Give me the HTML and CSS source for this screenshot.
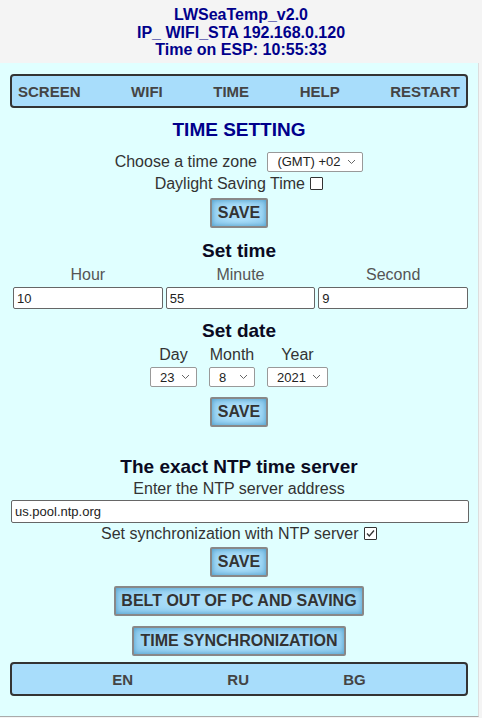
FILE: index.html
```html
<!DOCTYPE html>
<html>
<head>
<meta charset="utf-8">
<link rel="stylesheet" href="styles.css">
</head>
<body>
<header class="top">
  <div>LWSeaTemp_v2.0</div>
  <div>IP_ WIFI_STA 192.168.0.120</div>
  <div>Time on ESP: 10:55:33</div>
</header>
<main class="panel">
  <nav class="menu">
    <span>SCREEN</span><span>WIFI</span><span>TIME</span><span>HELP</span><span>RESTART</span>
  </nav>
  <h2 class="title">TIME SETTING</h2>
  <div class="row tzrow">Choose a time zone <select class="sel tz"><option>(GMT) +02</option></select></div>
  <div class="row">Daylight Saving Time <input type="checkbox" class="chk"></div>
  <div class="btnrow"><button class="btn">SAVE</button></div>

  <h3 class="sub">Set time</h3>
  <div class="grid3">
    <label class="lab">Hour</label><label class="lab">Minute</label><label class="lab">Second</label>
    <input class="inp" value="10"><input class="inp" value="55"><input class="inp" value="9">
  </div>

  <h3 class="sub date">Set date</h3>
  <div class="dates">
    <div class="dcol"><span>Day</span><select class="sel d"><option>23</option></select></div>
    <div class="dcol"><span>Month</span><select class="sel m"><option>8</option></select></div>
    <div class="dcol"><span>Year</span><select class="sel y"><option>2021</option></select></div>
  </div>
  <div class="btnrow dsave"><button class="btn">SAVE</button></div>

  <h3 class="sub ntp">The exact NTP time server</h3>
  <div class="row">Enter the NTP server address</div>
  <div class="ntprow"><input class="inp wide" value="us.pool.ntp.org"></div>
  <div class="row">Set synchronization with NTP server <input type="checkbox" class="chk" checked></div>
  <div class="btnrow nsave"><button class="btn">SAVE</button></div>
  <div class="btnrow big"><button class="btn">BELT OUT OF PC AND SAVING</button></div>
  <div class="btnrow big2"><button class="btn">TIME SYNCHRONIZATION</button></div>

  <nav class="menu lang">
    <span>EN</span><span>RU</span><span>BG</span>
  </nav>
</main>
</body>
</html>
```
FILE: styles.css
```css
html, body {
  margin: 0;
  padding: 0;
  background: #f4f4f4;
  font-family: "Liberation Sans", Arial, sans-serif;
  color: #333;
}
.top {
  text-align: center;
  color: #00008b;
  font-weight: bold;
  font-size: 16px;
  line-height: 17.5px;
  padding-top: 6px;
  height: 57px;
}
.panel {
  width: 479px;
  height: 654px;
  box-sizing: border-box;
  background: #e0ffff;
  border-right: 1px solid #ddd;
  border-bottom: 1px solid #aaa;
  padding: 11px 10px 0 10px;
}
.menu {
  display: flex;
  justify-content: space-between;
  align-items: center;
  height: 34px;
  box-sizing: border-box;
  border: 2px solid #333;
  border-radius: 4px;
  background: #a8ddfb;
  padding: 0 6px;
  font-weight: bold;
  font-size: 15px;
  color: #444;
}
.lang {
  justify-content: space-evenly;
  margin-top: 6px;
}
.title {
  margin: 11px 0 0 0;
  text-align: center;
  color: #00008b;
  font-size: 19px;
  line-height: 22px;
}
.row {
  text-align: center;
  font-size: 16px;
  line-height: 22px;
  color: #333;
}
.tzrow { margin-top: 10px; }
.sel {
  -webkit-appearance: none;
  appearance: none;
  font-family: "Liberation Sans", Arial, sans-serif;
  font-size: 13px;
  height: 20px;
  box-sizing: border-box;
  border: 1px solid #999;
  border-radius: 2px;
  background: #fff url("data:image/svg+xml,%3Csvg xmlns='http://www.w3.org/2000/svg' width='9' height='6' viewBox='0 0 9 6'%3E%3Cpath d='M1 1 L4.5 4.5 L8 1' fill='none' stroke='%23666' stroke-width='1'/%3E%3C/svg%3E") no-repeat right 6px center;
  color: #222;
  vertical-align: 1px;
  padding: 0 18px 0 9px;
}
.tz { width: 96px; margin-left: 6px; }
.chk {
  -webkit-appearance: none;
  appearance: none;
  width: 13px;
  height: 13px;
  box-sizing: border-box;
  border: 1px solid #333;
  border-radius: 1px;
  background: #fff;
  margin: 0 0 0 1px;
  vertical-align: -1px;
}
.chk:checked {
  background: #fff url("data:image/svg+xml,%3Csvg xmlns='http://www.w3.org/2000/svg' width='11' height='11' viewBox='0 0 11 11'%3E%3Cpath d='M2 5.5 L4.3 8 L9 2.5' fill='none' stroke='%23333' stroke-width='1.3'/%3E%3C/svg%3E") no-repeat center;
}
.btnrow {
  display: flex;
  justify-content: center;
  margin-top: 3px;
}
.btn {
  font-family: "Liberation Sans", Arial, sans-serif;
  font-weight: bold;
  font-size: 16px;
  color: #333;
  height: 30px;
  box-sizing: border-box;
  padding: 0 6px;
  border: 2px solid #888;
  border-radius: 2px;
  background: radial-gradient(ellipse at center, #a9ddf9 40%, #86c6ea 100%);
  box-shadow: inset 0 0 5px #4f9cc7;
}
.sub {
  margin: 12px 0 0 0;
  text-align: center;
  font-size: 19px;
  line-height: 22px;
  color: #0a0a22;
}
.grid3 {
  display: grid;
  grid-template-columns: 1fr 1fr 1fr;
  column-gap: 3px;
  padding: 0 0 0 3px;
  margin-top: 1px;
}
.lab {
  text-align: center;
  font-size: 16px;
  line-height: 24px;
  color: #555;
}
.inp {
  font-family: "Liberation Sans", Arial, sans-serif;
  font-size: 13px;
  height: 22px;
  box-sizing: border-box;
  border: 1px solid #666;
  border-radius: 2px;
  padding: 0 3px;
  color: #222;
  width: 100%;
  background: #fff;
}
.date { margin-top: 11px; }
.dates {
  display: flex;
  justify-content: center;
  gap: 12px;
  margin-top: 1px;
}
.dcol {
  display: flex;
  flex-direction: column;
  align-items: center;
  font-size: 16px;
  line-height: 24px;
  color: #333;
}
.dcol .sel { vertical-align: 0; }
.d { width: 47px; }
.m { width: 46px; }
.y { width: 61px; }
.dsave { margin-top: 10px; }
.ntp { margin-top: 29px; }
.ntprow { padding: 0 0 0 1px; margin: 0 -1px 0 0; }
.wide { height: 23px; }
.nsave { margin-top: 2px; }
.big { margin-top: 9px; }
.big .btn { padding: 0 5px; }
.big2 { margin-top: 10px; }
```
